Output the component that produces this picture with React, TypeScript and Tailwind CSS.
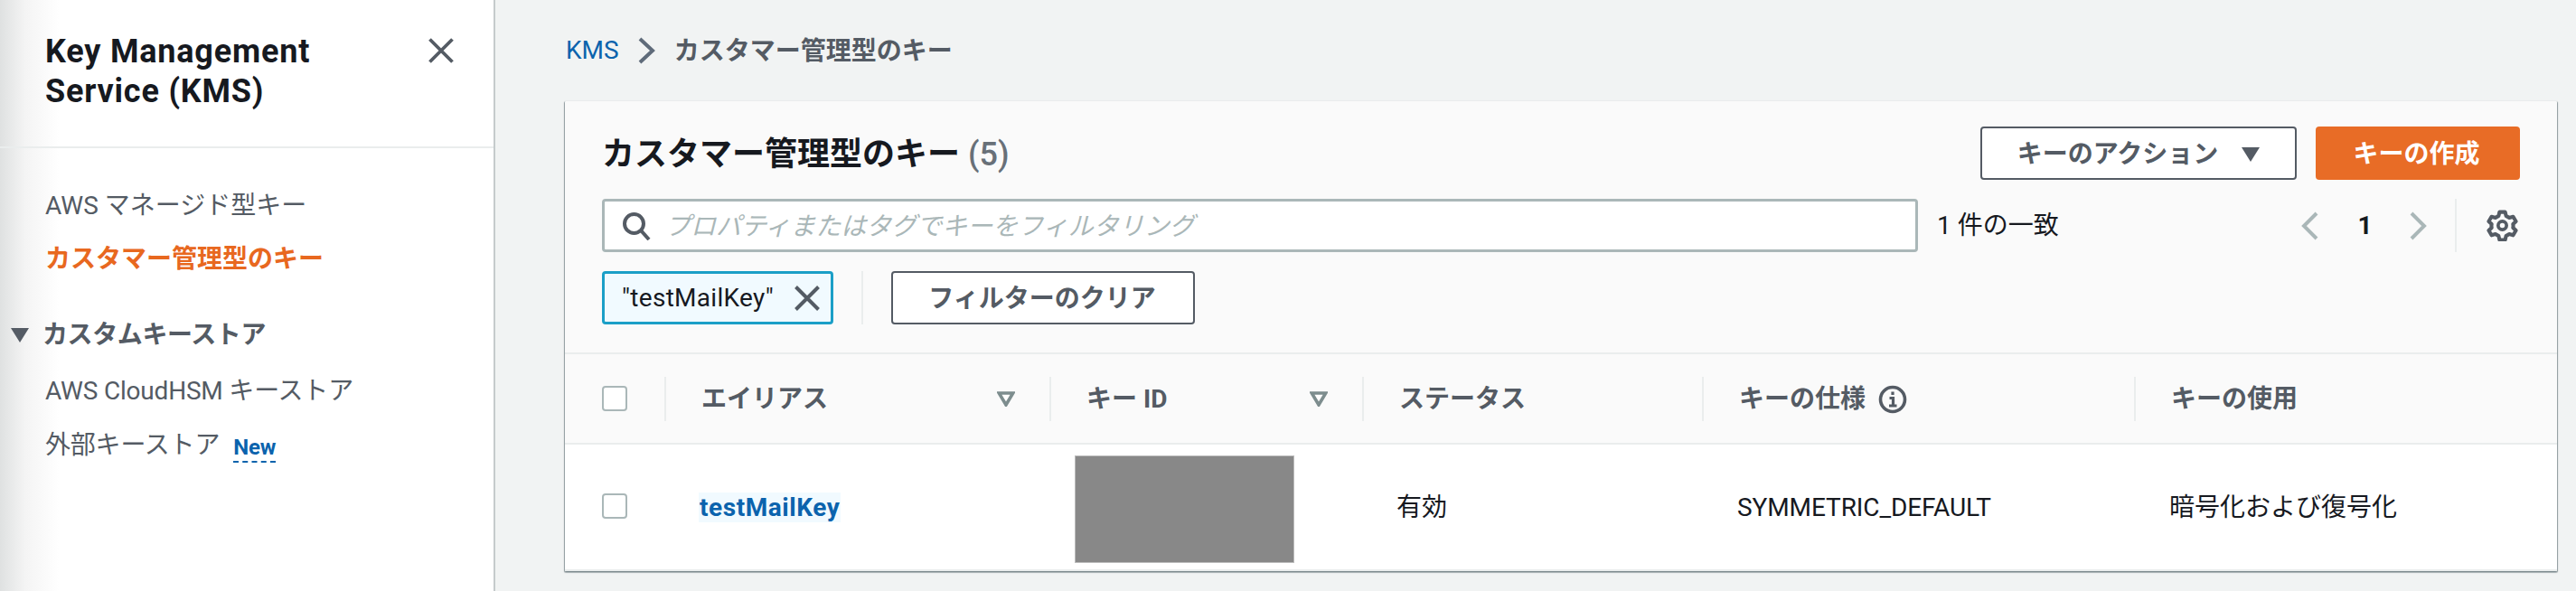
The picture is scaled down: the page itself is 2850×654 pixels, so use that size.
const font = { fontFamily: '"Roboto", "Noto Sans CJK JP", sans-serif' };

function Checkbox() {
  return <span className="block w-[28px] h-[28px] bg-white border-2 border-[#aab7b8] rounded-[4px]" />;
}

function FilterIcon() {
  return (
    <svg width="20" height="17" viewBox="0 0 20 17" className="shrink-0">
      <path d="M2.2 2h15.6L10 15z" fill="#fff" stroke="#7d8d8e" strokeWidth="3.6" strokeLinejoin="miter" />
    </svg>
  );
}

function Divider({ className }: { className: string }) {
  return <span className={`block w-[2px] bg-[#eaeded] ${className}`} />;
}

function HeaderCell({ title, filter, info }: { title: string; filter?: boolean; info?: boolean }) {
  return (
    <div className="flex items-center h-[49px] border-l-2 border-[#eaeded] pl-[39px] pr-[38px]">
      <span className="font-bold text-[28px] text-[#545b64] leading-[40px] whitespace-nowrap pt-[2px]">{title}</span>
      {info && (
        <svg width="32" height="32" viewBox="0 0 32 32" className="ml-[14px] mt-[2px]">
          <circle cx="16" cy="16" r="13.5" fill="none" stroke="#545b64" strokeWidth="3.6" />
          <path d="M16 7.5v3.5M12.5 14.5h4v8M12 23h8.5" fill="none" stroke="#545b64" strokeWidth="3.2" />
        </svg>
      )}
      {filter && <span className="ml-auto"><FilterIcon /></span>}
    </div>
  );
}

export default function App() {
  return (
    <div className="flex w-[2850px] h-[654px] bg-[#f1f3f3] overflow-hidden" style={font}>
      <aside className="w-[548px] shrink-0 h-full border-r-2 border-[#c5cbcc] bg-[linear-gradient(90deg,#dfe1e1_0px,#f4f4f4_28px,#ffffff_65px)]">
        <div className="h-[164px] border-b-2 border-[#eaeded] pl-[50px] pr-[44px] pt-[35px] flex justify-between items-start">
          <h2 className="text-[36px] leading-[44px] font-bold text-[#16191f] w-[360px] tracking-[0.8px]">Key Management Service (KMS)</h2>
          <svg width="28" height="28" viewBox="0 0 28 28" className="mt-[7px]">
            <path d="M1.5 1.5l25 25M26.5 1.5l-25 25" stroke="#545b64" strokeWidth="3.8" fill="none" />
          </svg>
        </div>
        <nav className="pt-[44px] text-[28px] leading-[40px] text-[#545b64]">
          <div className="pl-[50px] h-[40px]">AWS マネージド型キー</div>
          <div className="pl-[50px] h-[40px] mt-[19px] font-bold text-[#e8681f]">カスタマー管理型のキー</div>
          <div className="flex items-center h-[40px] mt-[44px] font-bold tracking-[-0.4px]">
            <svg width="20" height="16" viewBox="0 0 20 16" className="ml-[12px] mr-[15px]">
              <path d="M0 0h20L10 16z" fill="#545b64" />
            </svg>
            カスタムキーストア
          </div>
          <div className="pl-[50px] h-[40px] mt-[22px] tracking-[-0.2px]">AWS CloudHSM キーストア</div>
          <div className="pl-[50px] h-[40px] mt-[20px] flex items-center tracking-[-0.2px]">
            外部キーストア
            <span className="ml-[15px] mt-[5px] text-[24px] leading-[30px] font-bold text-[#0b63ad] border-b-2 border-dashed border-[#0b63ad]">New</span>
          </div>
        </nav>
      </aside>
      <main className="flex-1 pl-[77px] pr-[21px] pt-[36px]">
        <div className="flex items-center h-[40px] text-[28px] text-[#545b64]">
          <span className="text-[#0b63ad] pl-[1px]">KMS</span>
          <svg width="20" height="30" viewBox="0 0 20 30" className="ml-[21px] mr-[20px]">
            <path d="M2 2l14 13L2 28" fill="none" stroke="#5f6b7a" strokeWidth="4" />
          </svg>
          <span className="font-bold pt-[2px]">カスタマー管理型のキー</span>
        </div>
        <section className="mt-[36px] h-[520px] bg-[#fafafa] shadow-[0_1px_1px_1px_rgba(0,28,36,0.3),1px_1px_1px_0_rgba(0,28,36,0.15),-1px_1px_1px_0_rgba(0,28,36,0.15)] rounded-[1px]">
          <div className="h-[280px] border-b-2 border-[#eaeded] pl-[41px] pr-[41px] pt-[28px]">
            <div className="flex items-center justify-between h-[59px]">
              <h1 className="text-[36px] leading-[44px] font-bold text-[#16191f] whitespace-nowrap pt-[2px]">
                カスタマー管理型のキー <span className="font-medium text-[#687078]">(5)</span>
              </h1>
              <div className="flex gap-[21px]">
                <button className="flex items-center justify-center w-[350px] h-[59px] bg-white border-2 border-[#545b64] rounded-[4px] text-[28px] font-bold text-[#545b64]">
                  <span className="pt-[2px]">キーのアクション</span>
                  <svg width="20" height="16" viewBox="0 0 20 16" className="ml-[26px] mt-[2px]">
                    <path d="M0 0h20L10 16z" fill="#545b64" />
                  </svg>
                </button>
                <button className="w-[226px] h-[59px] bg-[#e86c26] rounded-[4px] text-[28px] font-bold text-white pt-[2px] pr-[3px]">キーの作成</button>
              </div>
            </div>
            <div className="flex items-center mt-[21px] h-[59px]">
              <div className="w-[1456px] h-[59px] bg-white border-[3px] border-[#aab7b8] rounded-[4px] flex items-center pl-[19px]">
                <svg width="32" height="32" viewBox="0 0 32 32">
                  <circle cx="13.5" cy="13.5" r="10.5" fill="none" stroke="#545b64" strokeWidth="4" />
                  <path d="M21 21l9 10" stroke="#545b64" strokeWidth="4" fill="none" />
                </svg>
                <span className="ml-[16px] text-[28px] italic text-[#aab7b8] whitespace-nowrap pt-[2px]">プロパティまたはタグでキーをフィルタリング</span>
              </div>
              <span className="ml-[21px] text-[28px] text-[#16191f] whitespace-nowrap pt-[1px]">1 件の一致</span>
              <div className="ml-auto flex items-center h-[59px]">
                <svg width="20" height="32" viewBox="0 0 20 32">
                  <path d="M17 2L3 16l14 14" fill="none" stroke="#aab7b8" strokeWidth="4" />
                </svg>
                <span className="w-[101px] text-center text-[28px] font-bold text-[#16191f]">1</span>
                <svg width="20" height="32" viewBox="0 0 20 32" className="-ml-[2px]">
                  <path d="M3 2l14 14L3 30" fill="none" stroke="#aab7b8" strokeWidth="4" />
                </svg>
                <Divider className="h-[59px] ml-[31px] mr-[33px]" />
                <svg width="35" height="35" viewBox="0 0 34 34" className="mr-[2px]">
                  <path d="M14 2.5h6l1 4.2 3.4 2 4.2-1.2 3 5.1-3.1 3a9 9 0 0 1 0 3.8l3.1 3-3 5.1-4.2-1.2-3.4 2-1 4.2h-6l-1-4.2-3.4-2-4.2 1.2-3-5.1 3.1-3a9 9 0 0 1 0-3.8l-3.1-3 3-5.1 4.2 1.2 3.4-2z" fill="none" stroke="#545b64" strokeWidth="4" strokeLinejoin="round" />
                  <circle cx="17" cy="17" r="4.5" fill="none" stroke="#545b64" strokeWidth="3.6" />
                </svg>
              </div>
            </div>
            <div className="flex items-center mt-[21px] h-[59px]">
              <div className="flex items-center w-[256px] h-[59px] bg-[#f1faff] border-[3px] border-[#1b9fc7] rounded-[4px] pl-[19px] text-[28px] text-[#16191f]">
                <span className="whitespace-nowrap tracking-[0.3px]">"testMailKey"</span>
                <svg width="28" height="28" viewBox="0 0 28 28" className="ml-auto mr-[12px]">
                  <path d="M1.5 1.5l25 25M26.5 1.5l-25 25" stroke="#545b64" strokeWidth="4" fill="none" />
                </svg>
              </div>
              <Divider className="h-[59px] ml-[31px] mr-[31px]" />
              <button className="w-[336px] h-[59px] bg-white border-2 border-[#545b64] rounded-[4px] text-[28px] font-bold text-[#545b64] pt-[2px] pr-[2px]">フィルターのクリア</button>
            </div>
          </div>
          <div className="grid grid-cols-[110px_426px_346px_376px_478px_468px] h-[100px] items-center border-b-2 border-[#eaeded]">
            <div className="pl-[41px]"><Checkbox /></div>
            <HeaderCell title="エイリアス" filter />
            <HeaderCell title="キー ID" filter />
            <HeaderCell title="ステータス" />
            <HeaderCell title="キーの仕様" info />
            <HeaderCell title="キーの使用" />
          </div>
          <div className="grid grid-cols-[110px_426px_346px_376px_478px_468px] h-[140px] items-center bg-white border-b-2 border-[#eaeded] text-[28px] text-[#16191f]">
            <div className="pl-[41px] pb-[3px]"><Checkbox /></div>
            <div className="pl-[38px] pt-[2px]">
              <span className="inline-block h-[33px] leading-[33px] px-[1px] bg-[#f1faff] font-bold text-[#0b63ad] tracking-[0.55px]">testMailKey</span>
            </div>
            <div className="pl-[28px] pt-[5px]">
              <span className="block w-[243px] h-[119px] bg-[#888888] border border-[#bcbcbc]" />
            </div>
            <div className="pl-[38px] pt-[2px]">有効</div>
            <div className="pl-[39px] pt-[2px] tracking-[-0.1px]">SYMMETRIC_DEFAULT</div>
            <div className="pl-[39px] pt-[2px]">暗号化および復号化</div>
          </div>
        </section>
      </main>
    </div>
  );
}
